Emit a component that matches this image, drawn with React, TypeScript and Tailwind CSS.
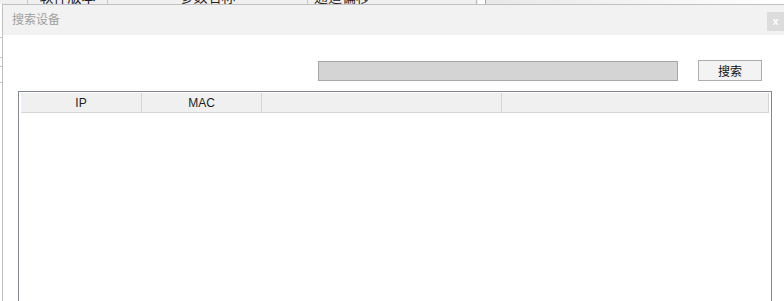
import React from "react";

const cjk = { fontFamily: '"Noto Sans CJK SC", "Noto Sans", sans-serif' };
const latin = { fontFamily: '"Liberation Sans", "Noto Sans CJK SC", sans-serif' };

function TopStrip() {
  return (
    <div className="flex h-[4px] overflow-hidden bg-white" style={cjk}>
      <div className="flex w-[478px] bg-[#f0f0f0] text-[14px] leading-[20px] text-[#222]">
        <div className="w-[28px] border-r border-[#c8c8c8]" />
        <div className="w-[80px] border-r border-[#c8c8c8] flex justify-center">
          <span className="-mt-[14px] whitespace-nowrap">软件版本</span>
        </div>
        <div className="w-[200px] border-r border-[#c8c8c8] flex justify-center">
          <span className="-mt-[14px] whitespace-nowrap">参数名称</span>
        </div>
        <div className="w-[169px] border-r border-[#b8b8b8] pl-[6px]">
          <span className="-mt-[14px] block whitespace-nowrap">通道偏移</span>
        </div>
      </div>
      <div className="w-[7px] bg-white" />
      <div className="flex-1 border-l border-[#a8a8a8] bg-gradient-to-r from-[#e8e8e8] to-white" />
    </div>
  );
}

export default function App() {
  return (
    <div className="w-[784px] h-[301px] overflow-hidden bg-white flex flex-col">
      <TopStrip />
      <div className="flex flex-1 min-h-0">
        <div className="w-[2px] flex flex-col bg-white">
          <div className="h-[33px]" />
          <div className="h-px bg-[#c8c8c8]" />
          <div className="h-[19px]" />
          <div className="h-px bg-[#c8c8c8]" />
          <div className="h-[8px]" />
          <div className="h-px bg-[#c8c8c8]" />
          <div className="h-[15px]" />
          <div className="h-px bg-[#c8c8c8]" />
        </div>
        <div className="flex-1 flex flex-col border-l border-t border-[#c0c0c0] bg-white min-h-0">
          <div className="h-[30px] bg-[#f2f2f2] flex items-start justify-between">
            <span className="ml-[9px] mt-[5px] text-[12px] leading-[18px] text-[#a0a0a0]" style={cjk}>
              搜索设备
            </span>
            <div
              className="mt-[7px] w-[17px] h-[19px] bg-[#dcdcdc] flex items-center justify-center text-[11px] font-bold text-white leading-none"
              style={latin}
            >
              x
            </div>
          </div>
          <div className="flex flex-col flex-1 min-h-0">
            <div className="flex items-start mt-[25px] h-[21px]">
              <div className="ml-[315px] mt-[1px] w-[360px] h-[20px] bg-[#d4d4d4] border border-[#a6a6a6]" />
              <div
                className="ml-[20px] w-[64px] h-[21px] bg-[#f3f3f3] border border-[#adadad] flex items-center justify-center text-[12px] text-[#111]"
                style={cjk}
              >
                搜索
              </div>
            </div>
            <div className="mt-[10px] ml-[15px] w-[754px] flex-1 border-l border-t border-r border-[#828790] pt-px pl-[2px] pr-[2px]">
              <div className="flex h-[20px] border-b border-[#d5d5d5] bg-[#f0f0f0] text-[12px] text-[#1e1e1e]" style={latin}>
                <div className="w-[121px] border-r border-[#d5d5d5] flex items-center justify-center">IP</div>
                <div className="w-[120px] border-r border-[#d5d5d5] flex items-center justify-center">MAC</div>
                <div className="w-[240px] border-r border-[#d5d5d5]" />
                <div className="w-[267px] border-r border-[#d5d5d5]" />
              </div>
            </div>
          </div>
        </div>
      </div>
    </div>
  );
}
